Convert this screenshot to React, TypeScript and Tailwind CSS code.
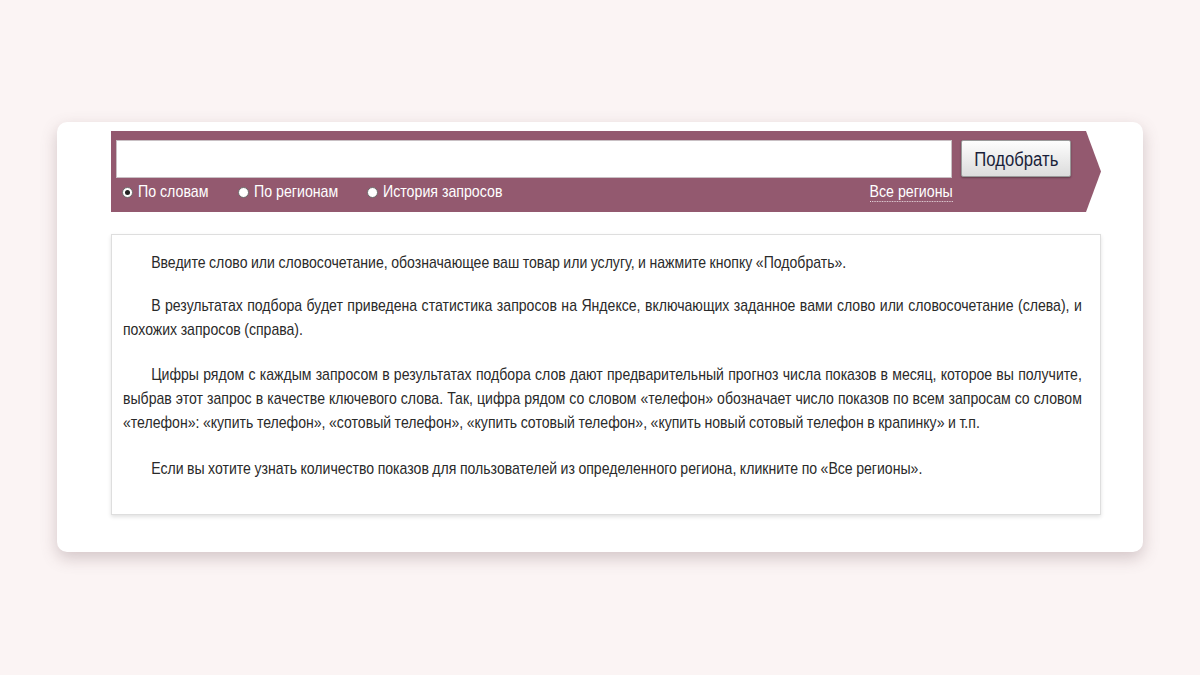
const font = { fontFamily: '"Liberation Sans", Arial, sans-serif' };

// the original uses a narrow face; squeeze Liberation Sans to its width
const narrow = 'inline-block scale-x-[0.834]';

function Radio({ label, checked, width }: { label: string; checked?: boolean; width: string }) {
    return (
        <label className={`flex items-center gap-[5px] text-white ${width}`}>
            <span className="flex h-[11px] w-[11px] shrink-0 items-center justify-center rounded-full border border-[#6b6b6b] bg-white">
                {checked && <span className="h-[5px] w-[5px] rounded-full bg-[#222]" />}
            </span>
            <span className={`${narrow} origin-left whitespace-nowrap`}>{label}</span>
        </label>
    );
}

export default function App() {
    return (
        <div className="min-h-[675px] w-full overflow-hidden bg-[#fbf4f4] pt-[122px]" style={font}>
            <div className="mx-[57px] h-[430px] rounded-[10px] bg-white pl-[54px] pr-[42px] pt-[9px] shadow-[0_6px_16px_rgba(120,90,95,0.3)]">
                {/* search bar */}
                <div className="h-[81px] bg-[#93596f] pl-[5px] pr-[30px] pt-[9px] [clip-path:polygon(0_0,calc(100%_-_15px)_0,100%_50%,calc(100%_-_15px)_100%,0_100%)]">
                    <div className="flex items-start gap-[9px]">
                        <input
                            className="h-[38px] flex-1 border border-[#c9c0c4] bg-white px-2 text-[17px] outline-none"
                            type="text"
                        />
                        <button className="h-[37px] w-[110px] rounded-[2px] border border-[#9a9a9a] bg-gradient-to-b from-[#fdfdfd] to-[#dcdcdc] text-[20px] text-[#1a1f3a] shadow-[0_1px_2px_rgba(0,0,0,0.35)]">
                            <span className={`${narrow} origin-center`}>Подобрать</span>
                        </button>
                    </div>
                    <div className="mt-[3px] flex items-center pl-[6px] text-[17px] leading-[22px]">
                        <Radio label="По словам" checked width="w-[116px]" />
                        <Radio label="По регионам" width="w-[129px]" />
                        <Radio label="История запросов" width="w-[140px]" />
                        <span className="ml-auto mr-[118px] flex justify-end">
                            <span className={`${narrow} origin-right whitespace-nowrap border-b border-dotted border-white/80 leading-[19px] text-white`}>
                                Все регионы
                            </span>
                        </span>
                    </div>
                </div>

                {/* help text */}
                <div className="mt-[22px] h-[281px] overflow-hidden border border-[#dedede] pl-[11px] pt-[16px] text-[17px] leading-[24px] text-[#2a2a2a] shadow-[0_2px_4px_rgba(0,0,0,0.12)]">
                    <div className="w-[1158px] origin-left scale-x-[0.828] [word-spacing:-0.5px]">
                        <p className="indent-[34px]">
                            Введите слово или словосочетание, обозначающее ваш товар или услугу, и нажмите кнопку «Подобрать».
                        </p>
                        <p className="mt-[19px] text-justify indent-[34px]">
                            В результатах подбора будет приведена статистика запросов на Яндексе, включающих заданное вами слово или словосочетание (слева), и похожих запросов (справа).
                        </p>
                        <p className="mt-[21px] text-justify indent-[34px]">
                            Цифры рядом с каждым запросом в результатах подбора слов дают предварительный прогноз числа показов в месяц, которое вы получите, выбрав этот запрос в качестве ключевого слова. Так, цифра рядом со словом «телефон» обозначает число показов по всем запросам со словом «телефон»: «купить телефон», «сотовый телефон», «купить сотовый телефон», «купить новый сотовый телефон в крапинку» и т.п.
                        </p>
                        <p className="mt-[22px] indent-[34px]">
                            Если вы хотите узнать количество показов для пользователей из определенного региона, кликните по «Все регионы».
                        </p>
                    </div>
                </div>
            </div>
        </div>
    );
}
